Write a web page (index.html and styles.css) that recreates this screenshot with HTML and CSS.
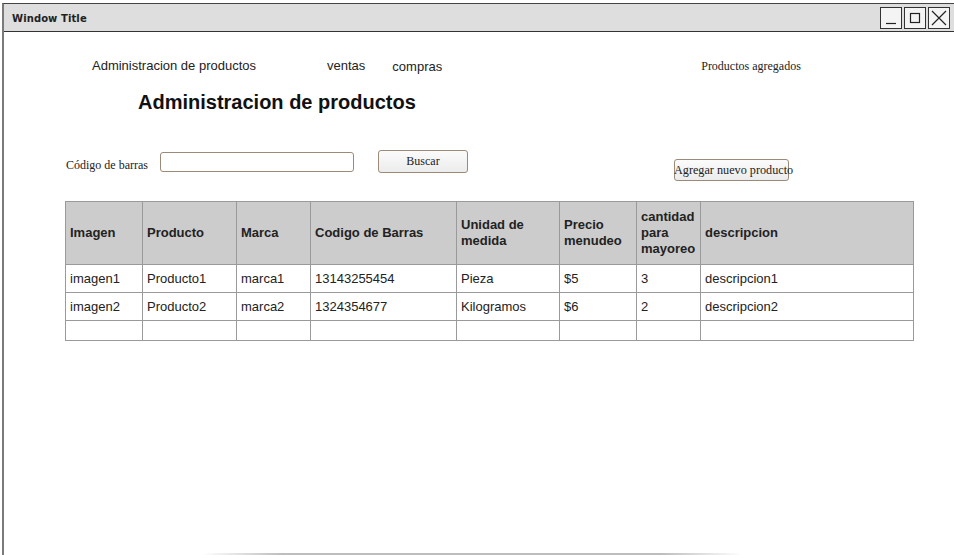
FILE: index.html
```html
<!DOCTYPE html>
<html lang="es">
<head>
<meta charset="utf-8">
<title>Administracion de productos</title>
<link rel="stylesheet" href="styles.css">
</head>
<body>
<div class="window">
  <div class="titlebar">
    <span class="title">Window Title</span>
    <div class="controls">
      <span class="ctrl"><svg width="20" height="20" viewBox="0 0 20 20"><line x1="5" y1="15.5" x2="15" y2="15.5" stroke="#222" stroke-width="1.2"/></svg></span>
      <span class="ctrl"><svg width="20" height="20" viewBox="0 0 20 20"><rect x="5.5" y="5.5" width="9" height="9" fill="none" stroke="#222" stroke-width="1.2"/></svg></span>
      <span class="ctrl"><svg width="20" height="20" viewBox="0 0 20 20"><path d="M3 3 L17 17 M17 3 L3 17" stroke="#222" stroke-width="1.2" fill="none"/></svg></span>
    </div>
  </div>
  <div class="content">
    <nav class="nav">
      <span class="nav-main">Administracion de productos</span>
      <span class="nav-ventas">ventas</span>
      <span class="nav-compras">compras</span>
      <span class="nav-agregados">Productos agregados</span>
    </nav>
    <h1 class="heading">Administracion de productos</h1>
    <div class="search">
      <label class="search-label">Código de barras</label>
      <input class="search-input" type="text">
      <button class="btn btn-buscar">Buscar</button>
      <button class="btn btn-agregar">Agregar nuevo producto</button>
    </div>
    <table class="grid">
      <colgroup>
        <col class="c1"><col class="c2"><col class="c3"><col class="c4"><col class="c5"><col class="c6"><col class="c7"><col class="c8">
      </colgroup>
      <thead>
        <tr>
          <th>Imagen</th><th>Producto</th><th>Marca</th><th>Codigo de Barras</th><th>Unidad de<br>medida</th><th>Precio<br>menudeo</th><th>cantidad<br>para<br>mayoreo</th><th>descripcion</th>
        </tr>
      </thead>
      <tbody>
        <tr><td>imagen1</td><td>Producto1</td><td>marca1</td><td>13143255454</td><td>Pieza</td><td>$5</td><td>3</td><td>descripcion1</td></tr>
        <tr><td>imagen2</td><td>Producto2</td><td>marca2</td><td>1324354677</td><td>Kilogramos</td><td>$6</td><td>2</td><td>descripcion2</td></tr>
        <tr class="empty"><td></td><td></td><td></td><td></td><td></td><td></td><td></td><td></td></tr>
      </tbody>
    </table>
  </div>
  <div class="bottom-shadow"></div>
</div>
</body>
</html>
```
FILE: styles.css
```css
html, body {
  margin: 0;
  padding: 0;
  background: #ffffff;
}
body {
  width: 954px;
  height: 555px;
  overflow: hidden;
  font-family: "Liberation Sans", Arial, sans-serif;
  color: #222;
}
.window {
  margin: 3px 0 0 2px;
  height: 552px;
  border-left: 2px solid #7a7a7a;
  border-top: 1.5px solid #444;
  box-sizing: border-box;
  display: flex;
  flex-direction: column;
}
.titlebar {
  height: 27px;
  background: #dedede;
  border-bottom: 1.5px solid #333;
  display: flex;
  align-items: center;
  justify-content: space-between;
}
.title {
  font-family: "DejaVu Sans", sans-serif;
  font-weight: bold;
  font-size: 10px;
  letter-spacing: 0.1px;
  color: #222;
  margin-left: 8px;
  margin-top: 1px;
}
.controls {
  display: flex;
  gap: 2px;
  margin-right: 4px;
}
.ctrl {
  width: 20px;
  height: 20px;
  border: 1px solid #333;
  background: #f4f4f4;
  display: flex;
}
.content {
  flex: 1;
  padding-left: 61px;
}
.nav {
  display: flex;
  align-items: baseline;
  margin-top: 26px;
  height: 16px;
  font-size: 13px;
  color: #222;
}
.nav-main {
  margin-left: 27px;
}
.nav-ventas {
  margin-left: 71px;
}
.nav-compras {
  margin-left: 27px;
  position: relative;
  top: 1px;
}
.nav-agregados {
  margin-left: 259px;
  font-family: "Liberation Serif", "Times New Roman", serif;
  font-size: 12px;
}
.heading {
  margin: 17px 0 0 73px;
  font-size: 20px;
  font-weight: bold;
  color: #111;
  line-height: 22px;
}
.search {
  display: flex;
  align-items: flex-start;
  margin-top: 37px;
  height: 51px;
  padding-left: 1px;
}
.search-label {
  font-family: "Liberation Serif", "Times New Roman", serif;
  font-size: 12px;
  margin-top: 8px;
  width: 94px;
}
.search-input {
  width: 194px;
  height: 20px;
  box-sizing: border-box;
  border: 1px solid #9b8a7a;
  border-radius: 3px;
  margin-top: 2px;
  padding: 0;
}
.btn {
  font-family: "Liberation Serif", "Times New Roman", serif;
  font-size: 12px;
  color: #222;
  background: linear-gradient(#fbfbfb, #ececec);
  border: 1px solid #9b8a7a;
  border-radius: 3px;
  box-sizing: border-box;
  padding: 0;
  white-space: nowrap;
}
.btn-buscar {
  margin-left: 24px;
  width: 90px;
  height: 23px;
}
.btn-agregar {
  margin-left: 206px;
  margin-top: 9px;
  width: 115px;
  height: 22px;
  overflow: visible;
  text-align: left;
  font-size: 12.2px;
  text-indent: -1px;
}
.grid {
  margin-left: 0;
  border-collapse: collapse;
  table-layout: fixed;
  width: 848px;
  font-size: 13px;
}
.c1 { width: 77px; }
.c2 { width: 94px; }
.c3 { width: 74px; }
.c4 { width: 146px; }
.c5 { width: 103px; }
.c6 { width: 77px; }
.c7 { width: 64px; }
.c8 { width: 213px; }
.grid th, .grid td {
  border: 1px solid #9a9a9a;
  padding: 0 4px;
  text-align: left;
  vertical-align: middle;
}
.grid th {
  background: #cccccc;
  font-weight: bold;
  height: 62px;
  line-height: 16px;
  color: #222;
}
.grid td {
  height: 27px;
  color: #222;
}
.grid tr.empty td {
  height: 19px;
}
.bottom-shadow {
  height: 2px;
  margin: 0 212px 0 198px;
  background: linear-gradient(90deg, rgba(180,180,180,0), #bdbdbd 15%, #bdbdbd 85%, rgba(180,180,180,0));
}
```
